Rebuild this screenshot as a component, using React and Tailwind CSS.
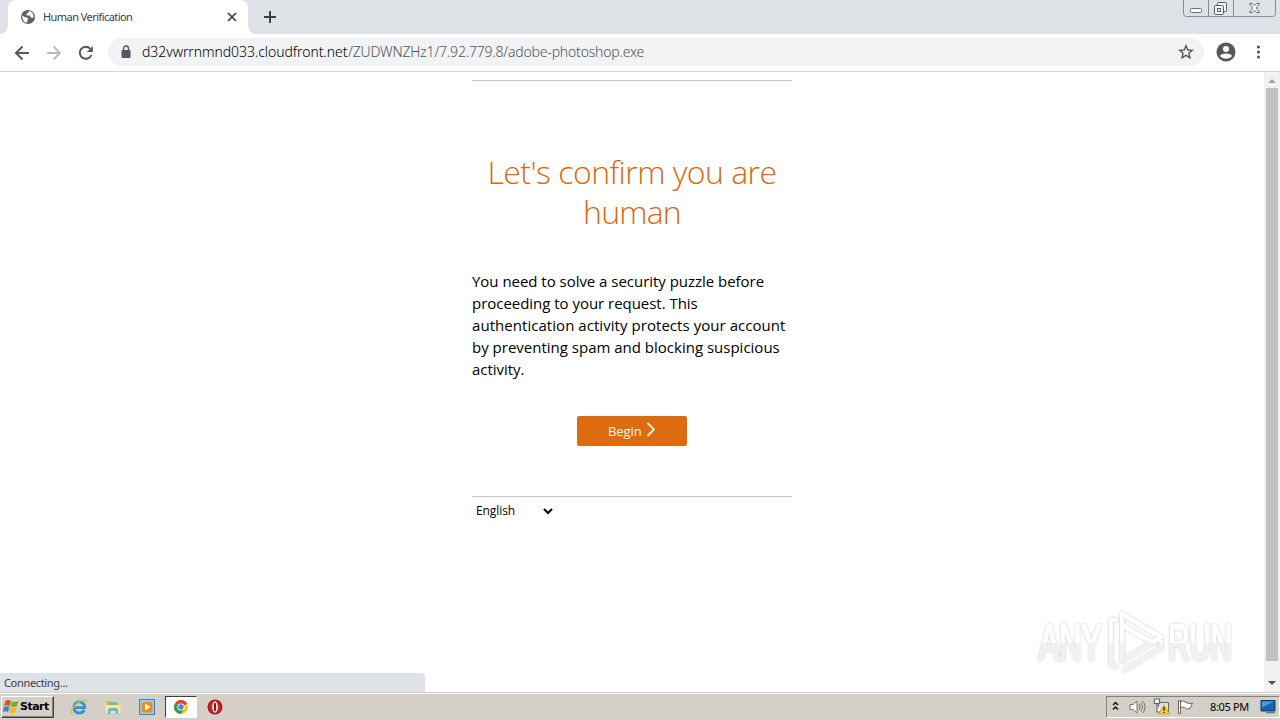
import React from "react";

function GlobeIcon() {
  return (
    <svg className="h-4 w-4 shrink-0" viewBox="0 0 16 16">
      <circle cx="8" cy="8" r="7" fill="#5f6368" />
      <path d="M2.400 6.200 L5 8.300 L7.200 8.500 L8.300 10 L7.300 11.400 L7.200 13.800 C4 13.500 2 10.500 2.400 6.200Z M8.800 2 L8.600 3.700 L6.500 4.600 L6.800 6.400 L10 6.600 L10.500 8.200 L12.200 8.800 L13.600 8.200 C13.800 5 12 2.500 8.800 2Z" fill="#fff" />
    </svg>
  );
}

function WindowButtons() {
  return (
    <svg className="h-[18px] w-[94px] shrink-0" viewBox="0 0 94 18" fill="none">
      <path d="M.5 0 V13.5 Q.5 16.5 3.5 16.5 H89.5 Q92.5 16.5 92.5 13.5 V0 M25.5 0 V16 M50.5 0 V16" stroke="#858b99" />
      <rect x="7.5" y="8.5" width="11" height="4" rx="1" fill="#fff" stroke="#686d79" />
      <rect x="34.5" y="2.5" width="9" height="9" rx="1" fill="#f5f6f8" stroke="#555b68" />
      <rect x="31.5" y="5.5" width="9" height="9" rx="1" fill="#f5f6f8" stroke="#555b68" />
      <rect x="34.5" y="8.5" width="3" height="3" stroke="#555b68" />
      <path d="M66.5 3.5 h3 l2 2.300 l2 -2.300 h3 l-3.200 4.500 l3.200 4.500 h-3 l-2 -2.300 l-2 2.300 h-3 l3.200 -4.500z" fill="#fafafa" stroke="#686d79" />
    </svg>
  );
}

function TabStrip() {
  return (
    <div className="flex h-[34px] bg-[#dee1e6]">
      <div className="w-2 bg-white">
        <div className="h-full rounded-br-lg bg-[#dee1e6]" />
      </div>
      <div className="flex w-60 items-center rounded-t-lg bg-white pl-3 pr-[10px]">
        <GlobeIcon />
        <span className="ml-[7px] flex-1 whitespace-nowrap font-['Noto_Sans',sans-serif] text-[11px] tracking-[-0.56px] text-[#3c4043]">Human Verification</span>
        <svg className="h-3 w-3" viewBox="0 0 12 12"><path d="M2 2 L10 10 M10 2 L2 10" stroke="#3c4043" strokeWidth="1.7" /></svg>
      </div>
      <div className="w-2 bg-white">
        <div className="h-full rounded-bl-lg bg-[#dee1e6]" />
      </div>
      <svg className="ml-[7px] mt-[10px] h-[14px] w-[14px]" viewBox="0 0 14 14"><path d="M7 1 V13 M1 7 H13" stroke="#3c4043" strokeWidth="2" /></svg>
      <div className="ml-auto mr-[3px]"><WindowButtons /></div>
    </div>
  );
}

function Toolbar() {
  return (
    <div className="flex h-[38px] items-center border-b border-[#d5d7da] bg-white pl-[14px] pr-[13px]">
      <svg className="h-4 w-4" viewBox="0 0 16 16" fill="none" stroke="#55585d" strokeWidth="2"><path d="M15 8 H2 M8.500 1.500 L2 8 L8.500 14.500" /></svg>
      <svg className="ml-4 h-4 w-4" viewBox="0 0 16 16" fill="none" stroke="#babcbe" strokeWidth="2"><path d="M1 8 H14 M7.500 1.500 L14 8 L7.500 14.500" /></svg>
      <svg className="ml-4 h-4 w-4" viewBox="0 0 16 16" fill="none"><path d="M13.400 10 A6 6 0 1 1 12.300 3.800" stroke="#55585d" strokeWidth="2" /><path d="M14.900 1 V7 H8.900z" fill="#55585d" /></svg>
      <div className="-mt-px ml-[14px] flex h-7 w-[1096px] items-center rounded-full bg-[#f1f3f4] pl-[13px] pr-[10px]">
        <svg className="h-[14px] w-[10px]" viewBox="0 0 10 14"><rect x=".5" y="5" width="9" height="8" rx="1" fill="#55585d" /><path d="M2.500 5.500 V3.500 A2.500 2.500 0 0 1 7.500 3.500 V5.500" fill="none" stroke="#55585d" strokeWidth="1.4" /></svg>
        <div className="-mt-px ml-[11px] flex flex-1 whitespace-nowrap font-['Noto_Sans',sans-serif] text-[14px] font-light">
          <span className="w-[206px] tracking-[-0.07px] text-black">d32vwrrnmnd033.cloudfront.net</span>
          <span className="tracking-[-0.19px] text-[#505459]">/ZUDWNZHz1/7.92.779.8/adobe-photoshop.exe</span>
        </div>
        <svg className="h-4 w-4" viewBox="0 0 16 16"><path d="M8 1.800 L9.800 6 L14.300 6.300 L10.900 9.200 L12 13.700 L8 11.300 L4 13.700 L5.100 9.200 L1.700 6.300 L6.200 6z" fill="none" stroke="#55585d" strokeWidth="1.4" /></svg>
      </div>
      <svg className="-mt-[2px] ml-3 h-5 w-5" viewBox="0 0 20 20"><circle cx="10" cy="10" r="9.500" fill="#55585d" /><circle cx="10" cy="7" r="3" fill="#fff" /><path d="M4 14 C5.500 10.800 14.500 10.800 16 14 C13.500 17.600 6.500 17.600 4 14z" fill="#fff" /></svg>
      <svg className="-mt-px ml-auto h-4 w-[18px]" viewBox="0 0 18 16" fill="#55585d"><circle cx="9.500" cy="3" r="1.600" /><circle cx="9.500" cy="8" r="1.600" /><circle cx="9.500" cy="13" r="1.600" /></svg>
    </div>
  );
}

function Watermark() {
  return (
    <svg className="absolute left-[1030px] top-[530px] h-[80px] w-[215px]" viewBox="0 0 215 80">
      <defs>
        <filter id="soft" x="-10%" y="-10%" width="120%" height="120%"><feDropShadow dx="0" dy="0" stdDeviation="1.5" floodColor="#000" floodOpacity=".24" /></filter>
        <linearGradient id="shade" x1="0" y1="0" x2="0" y2="80" gradientUnits="userSpaceOnUse"><stop offset=".5" stopColor="#fff" /><stop offset=".52" stopColor="#f1f1f1" /></linearGradient>
      </defs>
      <g filter="url(#soft)">
        <g transform="scale(.56 1)" fill="url(#shade)" stroke="url(#shade)" strokeWidth="1.6" fontFamily="Liberation Sans, sans-serif" fontSize="50">
          <text x="16" y="58" textLength="112" lengthAdjust="spacingAndGlyphs">ANY</text>
          <text x="247" y="58" textLength="114" lengthAdjust="spacingAndGlyphs">RUN</text>
        </g>
        <g fill="none" stroke="url(#shade)" strokeWidth="4" strokeLinejoin="round">
          <path d="M92 61 V12 L131 35 L92 59" />
          <path d="M87 18 H81 V63 L87 65 M92 23 L125 42 M93 69 L131 46 V38" />
        </g>
      </g>
    </svg>
  );
}

function Scrollbar() {
  return (
    <div className="flex w-4 flex-col items-center bg-[#f1f1f1]">
      <svg className="h-4 w-4 shrink-0" viewBox="0 0 16 16"><path d="M4 11 L8 7 L12 11z" fill="#a0a0a0" /></svg>
      <div className="h-[573px] w-3 bg-[#c1c1c1]" />
      <svg className="mt-auto h-[17px] w-4 shrink-0" viewBox="0 0 16 17"><path d="M4 6 L8 10 L12 6z" fill="#505050" /></svg>
    </div>
  );
}

function Page() {
  return (
    <div className="relative flex h-[620px] bg-white">
      <main className="flex flex-1 justify-center">
        <div className="mt-2 w-80 font-['Open_Sans',sans-serif]">
          <hr className="border-[#c9c9c9]" />
          <h1 className="mt-[71px] whitespace-nowrap text-center text-[32px] font-light leading-10 text-[#d9680f]">
            <span className="block tracking-[-0.54px]">Let's confirm you are</span>
            <span className="block tracking-[-0.8px]">human</span>
          </h1>
          <p className="mt-[38px] whitespace-nowrap text-[15px] leading-[22px] text-black">
            <span className="block tracking-[-0.03px]">You need to solve a security puzzle before</span>
            <span className="block tracking-[-0.03px]">proceeding to your request. This</span>
            <span className="block tracking-[0.05px]">authentication activity protects your account</span>
            <span className="block tracking-[0px]">by preventing spam and blocking suspicious</span>
            <span className="block tracking-[-0.03px]">activity.</span>
          </p>
          <button className="mx-auto mt-[36px] flex h-[30px] w-[110px] rounded-[2px] bg-[#dd6b10] pl-[31px] text-[13px] leading-[30px] text-[#fff5e6]">
            <span className="w-[38px] text-left tracking-[-0.05px]">Begin</span>
            <svg className="mt-[6px] h-[15px] w-[10px]" viewBox="0 0 10 15" fill="none"><path d="M1.500 1 L8 7.500 L1.500 14" stroke="#fff5e6" strokeWidth="1.8" /></svg>
          </button>
          <hr className="mt-[50px] border-[#c9c9c9]" />
          <div className="flex h-7 w-[81px] items-center justify-between pl-1 text-[12px] text-black">
            <span className="tracking-[-0.08px]">English</span>
            <svg className="h-[7px] w-[10px]" viewBox="0 0 10 7" fill="none"><path d="M1 1 L5 5 L9 1" stroke="#000" strokeWidth="2" /></svg>
          </div>
        </div>
      </main>
      <Scrollbar />
      <Watermark />
      <div className="absolute bottom-0 left-0 flex h-[19px] w-[425px] items-center rounded-tr bg-[#dee1e6] pl-1 pt-[2px] font-['Noto_Sans',sans-serif] text-[11px] tracking-[-0.33px] text-[#3c4043]">Connecting...</div>
    </div>
  );
}

function StartButton() {
  return (
    <div className="flex h-[22px] w-[53px] items-center border border-b-[#404040] border-l-white border-r-[#404040] border-t-white bg-[#d4d0c8] shadow-[inset_-1px_-1px_#858078]">
      <svg className="ml-px h-4 w-4" viewBox="0 0 16 16">
        <path d="M2.500 2 C4.500 .5 6 1 8 2 L6.500 7 C5 6 3 6 1 7z" fill="#e5491d" />
        <path d="M9 2.400 C11 3.400 13 3 15.500 2 L14 7 C12 8 10 8.300 7.500 7.300z" fill="#72ae27" />
        <path d="M.8 8 C3 7 5 7 6.300 8 L5 13 C3.500 12 1.500 12 0 13z" fill="#2b86d0" />
        <path d="M7.200 8.300 C9.500 9.300 12 9 13.800 8 L12.500 13 C10.500 14.300 8 14.200 5.800 13.200z" fill="#f5b81b" />
      </svg>
      <span className="ml-px pt-[2px] font-['DejaVu_Sans',sans-serif] text-[11px] font-bold tracking-[-0.5px] text-black">Start</span>
    </div>
  );
}

function ExplorerIcon() {
  return (
    <svg className="h-[18px] w-[18px]" viewBox="0 0 18 18" fill="none">
      <path d="M14.300 11.800 A5.500 5.500 0 1 1 14.800 9.700 H5.500" stroke="#2796d5" strokeWidth="2.8" />
      <path d="M3 15.500 C-1 17 1 10 7 5.500 C11 2 17 .5 16.300 4" stroke="#e0b83a" strokeWidth="1.5" />
    </svg>
  );
}

function FolderIcon() {
  return (
    <svg className="h-[18px] w-[18px]" viewBox="0 0 18 18">
      <path d="M2 3 H7 L8 5 H15 V14 H2z" fill="#e4c064" /><path d="M4 4 H13 V7 H4z" fill="#79c178" />
      <path d="M1 7 H17 L16 15 H2z" fill="#f6e7a2" /><path d="M4 16 V12 Q4 10 6 10 H12 Q14 10 14 12 V16 H11.500 V13 H6.500 V16z" fill="#67b7df" />
    </svg>
  );
}

function PlayerIcon() {
  return (
    <svg className="h-[18px] w-[18px]" viewBox="0 0 18 18">
      <rect x="1.5" y="1.5" width="15" height="15" fill="#9bc9ea" stroke="#3489c4" />
      <rect x="3.5" y="4" width="11" height="10.500" rx="3" fill="#f18a14" /><path d="M7 5.500 L12.500 9 L7 12.500z" fill="#fff" />
    </svg>
  );
}

function ChromeIcon() {
  return (
    <svg className="h-[14px] w-[14px]" viewBox="0 0 14 14">
      <circle cx="7" cy="7" r="7" fill="#f5c518" />
      <path d="M7 7 L.9 3.500 A7 7 0 0 1 13.100 3.500z" fill="#dc4437" />
      <path d="M7 7 L.9 3.500 A7 7 0 0 0 7 14 L10 8.700z" fill="#2f9d55" />
      <circle cx="7" cy="7" r="3.600" fill="#fff" /><circle cx="7" cy="7" r="2.700" fill="#4484e8" />
    </svg>
  );
}

function OperaIcon() {
  return (
    <svg className="h-4 w-4" viewBox="0 0 16 16">
      <circle cx="8" cy="8" r="7.500" fill="#a70f17" /><circle cx="8" cy="8" r="6.500" fill="#c91f25" />
      <ellipse cx="8" cy="8" rx="2.800" ry="5.700" fill="#fff" /><ellipse cx="8" cy="8" rx="1.200" ry="4.500" fill="#8c1017" />
    </svg>
  );
}

function Tray() {
  return (
    <div className="ml-auto flex h-[22px] w-[174px] items-center border border-b-white border-l-[#858078] border-r-white border-t-[#858078]">
      <svg className="-mt-[2px] ml-[5px] h-[10px] w-[7px]" viewBox="0 0 7 10" fill="none" stroke="#111" strokeWidth="1.5"><path d="M1 4 L3.500 1.500 L6 4 M1 8.500 L3.500 6 L6 8.500" /></svg>
      <svg className="ml-[10px] h-4 w-[17px]" viewBox="0 0 17 16" fill="none"><path d="M1 5.500 H4 L8 2 V14 L4 10.500 H1z" fill="#fff" stroke="#77756f" /><path d="M10 5 Q12 8 10 11 M12 3.500 Q15 8 12 12.500 M14 2 Q18 8 14 14" stroke="#77756f" /></svg>
      <svg className="ml-[7px] h-[17px] w-[17px]" viewBox="0 0 17 17"><path d="M5.500 4.500 H15.500 V13.500 H5.500z" fill="#e2e2e2" stroke="#666" /><path d="M1.500 1 V5.500 H6.500 V1 H1.500 M4 6 V14 H8" fill="#fff" stroke="#666" strokeWidth="1.2" /><path d="M11 6.500 L16.500 16 H5.500z" fill="#f7cc25" stroke="#c69b17" strokeWidth=".7" /><path d="M11 9 V12.800 M11 14 V15" stroke="#222" strokeWidth="1.4" /></svg>
      <svg className="ml-[7px] h-4 w-[17px]" viewBox="0 0 17 16" fill="#fff" stroke="#686661"><path d="M1.500 1.500 H3.500 V14.500 H1.500z M3.500 2.500 Q7 1 9 3.500 Q12 5.500 15.500 4 L13 9.500 Q9 11 7.500 8.500 Q5.500 7.500 3.500 9z" /></svg>
      <span className="ml-4 w-[50px] whitespace-nowrap pt-px font-['Noto_Sans',sans-serif] text-[11px] tracking-[-0.35px] text-black">8:05 PM</span>
      <svg className="h-[15px] w-4" viewBox="0 0 16 15"><path d="M1 1.500 H15 V12 H1z" fill="#1764b4" stroke="#0d3b72" /><path d="M2 2.500 H14 L2 8.500z" fill="#4b9ce2" /><path d="M6 13.500 H15" stroke="#6e7b8b" strokeWidth="1.5" /></svg>
    </div>
  );
}

function Taskbar() {
  return (
    <div className="flex h-7 items-center border-t border-[#d4d0c8] bg-[#d4d0c8] pl-px shadow-[inset_0_1px_#fff]">
      <StartButton />
      <div className="ml-4 flex gap-4"><ExplorerIcon /><FolderIcon /><PlayerIcon /></div>
      <div className="ml-[9px] flex h-[22px] w-8 items-center justify-center border border-b-white border-l-[#404040] border-r-white border-t-[#404040] bg-white"><ChromeIcon /></div>
      <div className="ml-[10px]"><OperaIcon /></div>
      <Tray />
    </div>
  );
}

export default function App() {
  return (
    <div className="h-[720px] w-[1280px] overflow-hidden bg-white">
      <TabStrip />
      <Toolbar />
      <Page />
      <Taskbar />
    </div>
  );
}
